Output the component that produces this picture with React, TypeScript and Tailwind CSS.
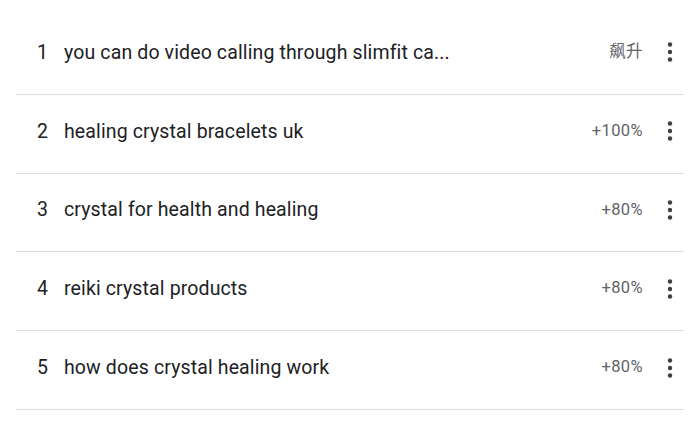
const rows = [
  { n: 1, q: "you can do video calling through slimfit ca...", v: "飙升" },
  { n: 2, q: "healing crystal bracelets uk", v: "+100%" },
  { n: 3, q: "crystal for health and healing", v: "+80%" },
  { n: 4, q: "reiki crystal products", v: "+80%" },
  { n: 5, q: "how does crystal healing work", v: "+80%" },
];

const MoreDots = () => (
  <svg width="8" height="20" viewBox="0 0 8 20" className="fill-[#3c4043]">
    <circle cx="4" cy="2.5" r="2.2" />
    <circle cx="4" cy="10" r="2.2" />
    <circle cx="4" cy="17.5" r="2.2" />
  </svg>
);

export default function App() {
  return (
    <div
      className="w-[689px] h-[425px] bg-white pt-4 overflow-hidden"
      style={{ fontFamily: "Roboto, 'Noto Sans CJK SC', sans-serif" }}
    >
      <div className="mx-4 w-[668px]">
        {rows.map((r) => (
          <div
            key={r.n}
            className="h-[78.8px] border-b border-[#dadce0] flex items-center pb-[5px] pl-[21px] pr-[10px]"
          >
            <span className="w-[27px] text-[19.5px] text-[#202124]">{r.n}</span>
            <span className="flex-1 text-[19.5px] tracking-[0.13px] text-[#202124]">{r.q}</span>
            <span className="text-[16.5px] tracking-[0.4px] text-[#5f6368] mr-[23px]">{r.v}</span>
            <MoreDots />
          </div>
        ))}
      </div>
    </div>
  );
}
